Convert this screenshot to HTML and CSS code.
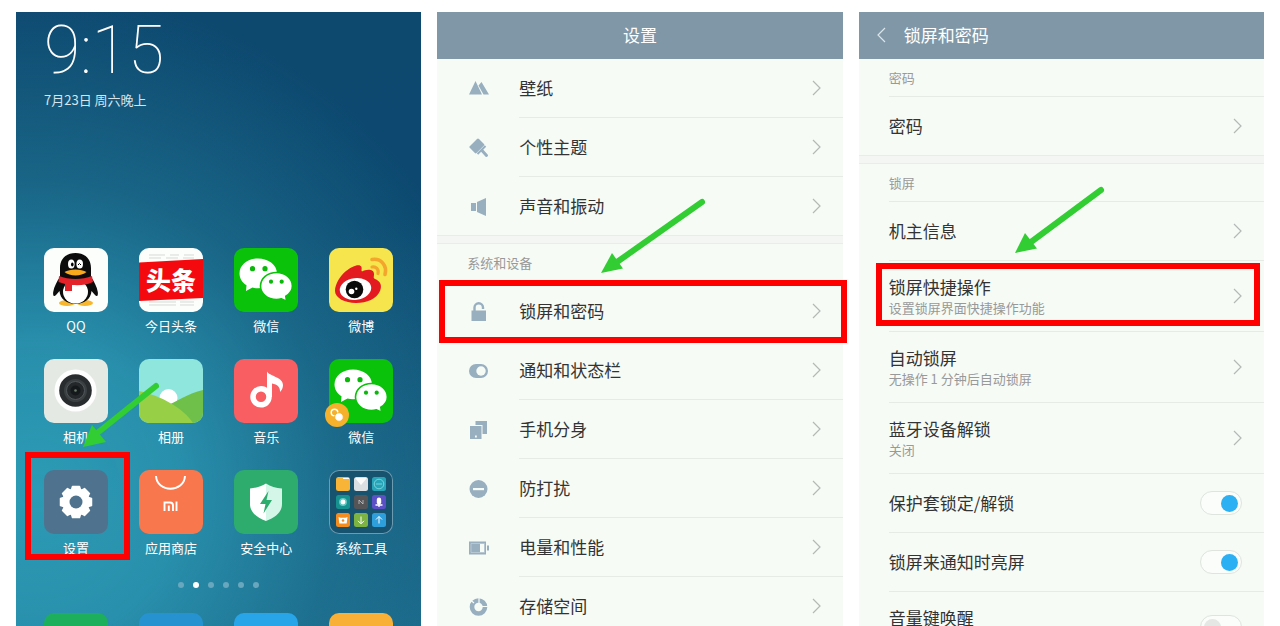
FILE: index.html
```html
<!DOCTYPE html>
<html lang="zh-CN">

<head>
    <meta charset="UTF-8">
    <meta name="viewport" content="width=device-width, initial-scale=1.0">
    <title>锁屏快捷操作</title>
    <link rel="stylesheet" href="styles.css">
</head>

<body>
    <!-- shared shapes -->
    <svg class="defs" aria-hidden="true">
        <symbol id="next" viewBox="0 0 9 16">
            <path d="M1 1l7 7-7 7" fill="none" stroke="#b4b9b5" stroke-width="1.2" />
        </symbol>
        <symbol id="wechat" viewBox="0 0 64 64">
            <path d="M24 10.500C13.500 10.500 5.500 17 5.500 25.500c0 5 2.800 9 7 11.800L12 43l6.500-3.400c1.800.5 3.600.7 5.500.7 10.500 0 19-6.300 19-14.800s-8.500-15-19-15z" fill="#fff" />
            <path d="M42.500 24.500c-9 0-16 6-16 13.500s7 13.500 16 13.500c1.800 0 3.300-.2 4.900-.7l5.200 2.500-.8-5c4-2.500 6.600-6 6.600-10.300 0-7.500-7-13.500-15.900-13.500z" fill="#fff" stroke="#0ac20a" stroke-width="1.600" />
            <g fill="#0ab80a">
                <circle cx="18.500" cy="20.700" r="2.600" />
                <circle cx="31" cy="20.700" r="2.600" />
                <circle cx="37" cy="33.700" r="2.100" />
                <circle cx="47.700" cy="33.700" r="2.100" />
            </g>
        </symbol>
    </svg>

    <main class="box">
        <!-- home screen -->
        <section class="panel home">
            <div class="clock">
                <p class="time">9:15</p>
                <p class="date">7月23日 周六晚上</p>
            </div>
            <div class="apps">
                <a class="app" href="#">
                    <svg class="icon qq" viewBox="0 0 64 64">
                        <ellipse cx="23" cy="55" rx="8" ry="3" fill="#f8b62c" />
                        <ellipse cx="41" cy="55" rx="8" ry="3" fill="#f8b62c" />
                        <path d="M31.500 5C22 5 16 11 16 20v9c-3 4-6 10-6.800 15-.5 4 1 5 2.800 3l3.500-4C16 51 23 56 31.500 56S47 51 47.500 43l3.500 4c1.800 2 3.300 1 2.800-3-.8-5-3.800-11-6.800-15v-9C47 11 41 5 31.500 5z" fill="#0c0c0c" />
                        <ellipse cx="31.500" cy="44" rx="12.500" ry="11.500" fill="#fff" />
                        <path d="M15 28c10 4 23 4 33 0l1 6c-6 3-13 3.500-21 3v6h-7v-7l-6.500-2z" fill="#e3222a" />
                        <ellipse cx="27.300" cy="16" rx="3.300" ry="4.500" fill="#fff" />
                        <ellipse cx="35.700" cy="16" rx="3.300" ry="4.500" fill="#fff" />
                        <ellipse cx="28.300" cy="16.500" rx="1.300" ry="1.900" fill="#000" />
                        <path d="M34 17q1.500-3 3 0" fill="none" stroke="#000" />
                        <path d="M20.500 24c5-3.500 17-3.500 22 0-5 4.500-17 4.500-22 0z" fill="#f8a81c" />
                    </svg>
                    <span>QQ</span>
                </a>
                <a class="app" href="#">
                    <svg class="icon news" viewBox="0 0 64 64">
                        <path d="M10 7h16M31 7h9M45 7h10M10 10h12M27 10h12M44 10h11M10 54h27M41 54h14M10 57h27M41 57h14" stroke="#d7d9d7" stroke-width="1" />
                        <path d="M0 14.500L64 11v39L0 53z" fill="#f40a0e" />
                        <text class="news-name" x="7" y="42">头条</text>
                    </svg>
                    <span>今日头条</span>
                </a>
                <a class="app" href="#">
                    <svg class="icon wechat">
                        <use href="#wechat" />
                    </svg>
                    <span>微信</span>
                </a>
                <a class="app" href="#">
                    <svg class="icon weibo" viewBox="0 0 64 64">
                        <path d="M6 43c0-7 5-15 11-20s14-8 15.500-4c.5 2-.5 4 .5 4.500 4-2.500 12-3 12 2.500 0 3-1 4 1 5 5 2 7.500 6 5 12-3.500 8-13 12-24 12S6 50 6 43z" fill="#e31a20" />
                        <ellipse cx="26.500" cy="41" rx="15.800" ry="10.800" fill="#fff" transform="rotate(-7 26.500 41)" />
                        <circle cx="25.500" cy="41.500" r="8.800" fill="#0a0a0a" />
                        <circle cx="22.500" cy="43.500" r="2.800" fill="#fff" />
                        <circle cx="27.300" cy="40.700" r="1.200" fill="#fff" />
                        <path d="M43 11.500c9-1.500 15.500 6 13 15" fill="none" stroke="#f4a52c" stroke-width="3.600" stroke-linecap="round" />
                        <path d="M43 19c4-.8 7 2.300 6 6.500" fill="none" stroke="#f4a52c" stroke-width="3.200" stroke-linecap="round" />
                    </svg>
                    <span>微博</span>
                </a>
                <a class="app" href="#">
                    <svg class="icon camera" viewBox="0 0 64 64">
                        <circle cx="31.500" cy="31.500" r="21" fill="#fdfefd" />
                        <circle cx="31.500" cy="31.500" r="16.300" fill="#292c2e" />
                        <circle cx="31.500" cy="31.500" r="11.500" fill="#3a3f42" />
                        <circle cx="31.500" cy="31.500" r="9" fill="#24282a" stroke="#50575a" />
                        <circle cx="31.500" cy="31.500" r="5" fill="#15191b" />
                        <circle cx="31.500" cy="31.500" r="1.300" fill="#6c7c70" />
                    </svg>
                    <span>相机</span>
                </a>
                <a class="app" href="#">
                    <svg class="icon album" viewBox="0 0 64 64">
                        <circle cx="29.500" cy="39" r="9" fill="#fff" />
                        <path d="M24 48c14-5 25-14 40-17v33H24z" fill="#6fc04b" />
                        <path d="M0 32c22 5 43 16 54 32H0z" fill="#97d046" />
                    </svg>
                    <span>相册</span>
                </a>
                <a class="app" href="#">
                    <svg class="icon music" viewBox="0 0 64 64">
                        <circle cx="27" cy="37.800" r="8" fill="none" stroke="#fff" stroke-width="5.500" />
                        <path d="M33 12.500c3 5 16 5.500 16 13.500 0 3-1.200 5-3 7 .3-5-2.500-7.500-8-8.500V38h-5z" fill="#fff" />
                    </svg>
                    <span>音乐</span>
                </a>
                <a class="app" href="#">
                    <svg class="icon wechat">
                        <use href="#wechat" />
                    </svg>
                    <svg class="badge" viewBox="0 0 24 24">
                        <circle cx="12" cy="12" r="12" fill="#f5b12b" />
                        <circle cx="9.500" cy="9.500" r="3.300" fill="none" stroke="#fff" stroke-width="1.500" />
                        <circle cx="14" cy="14" r="4.300" fill="#fff" stroke="#f5b12b" />
                    </svg>
                    <span>微信</span>
                </a>
                <a class="app current" href="#">
                    <svg class="icon settings" viewBox="0 0 64 64">
                        <g fill="#fff" stroke="#fff" stroke-width="1.500" stroke-linejoin="round">
                            <circle cx="32" cy="32" r="13" />
                            <path id="teeth" d="M28.500 16.500h7l1.500 5v21l-1.500 5h-7l-1.500-5v-21z" />
                            <use href="#teeth" transform="rotate(45 32 32)" />
                            <use href="#teeth" transform="rotate(90 32 32)" />
                            <use href="#teeth" transform="rotate(135 32 32)" />
                        </g>
                        <circle cx="32" cy="32" r="6.500" fill="#4f738f" />
                    </svg>
                    <span>设置</span>
                    <svg class="arrow" width="80" height="68" viewBox="0 0 80 68">
                        <path d="M74 6L14 54" stroke="#32cd32" stroke-width="6" stroke-linecap="round" />
                        <path d="M1 67l9-22 14 17z" fill="#32cd32" />
                    </svg>
                </a>
                <a class="app" href="#">
                    <svg class="icon store" viewBox="0 0 64 64">
                        <path d="M17 6c1 17 28 17 29 0" fill="none" stroke="#fff" stroke-width="2" />
                        <path d="M25.500 41v-8.500h5.500q3 0 3 3V41M29.800 35.500V41M37.500 31.500V41" fill="none" stroke="#fff" stroke-width="1.900" />
                    </svg>
                    <span>应用商店</span>
                </a>
                <a class="app" href="#">
                    <svg class="icon safe" viewBox="0 0 64 64">
                        <path d="M32 13.500c4.500 3 10 4.500 16 5V34c0 8-6 13-16 17z" fill="#d3f6e8" />
                        <path d="M32 13.500c-4.500 3-10 4.500-16 5V34c0 8 6 13 16 17z" fill="#fff" />
                        <path d="M34.500 21L26 34h5.500l-2 9.500L38 30h-5.500z" fill="#2dac6d" />
                    </svg>
                    <span>安全中心</span>
                </a>
                <a class="app" href="#">
                    <svg class="icon folder" viewBox="0 0 64 64">
                        <rect x="7" y="7" width="14" height="14" rx="2.500" fill="#f8b436" />
                        <path d="M14 8.500h6" stroke="#fff" />
                        <rect x="25" y="7" width="14" height="14" rx="2.500" fill="#dcdfe1" />
                        <path d="M26 8h12l-6 7z" fill="#fafafa" />
                        <rect x="43" y="7" width="14" height="14" rx="2.500" fill="#28a4b8" />
                        <circle cx="50" cy="14" r="4.800" fill="none" stroke="#78d3dc" />
                        <path d="M47 14h6" stroke="#78d3dc" />
                        <rect x="7" y="25" width="14" height="14" rx="2.500" fill="#16918f" />
                        <circle cx="14" cy="32" r="3.200" fill="#fff" stroke="#62c8c2" stroke-width="1.500" />
                        <rect x="25" y="25" width="14" height="14" rx="2.500" fill="#555558" />
                        <path d="M30 34v-4l4 4v-4" fill="none" stroke="#c6c6c8" stroke-width=".8" />
                        <rect x="43" y="25" width="14" height="14" rx="2.500" fill="#5b50c6" />
                        <rect x="47.800" y="27.500" width="4.400" height="7" rx="2.200" fill="#fff" />
                        <path d="M46.500 35h7M50 34v3" stroke="#fff" stroke-width="1.300" />
                        <rect x="7" y="43" width="14" height="14" rx="2.500" fill="#f58c20" />
                        <path d="M9.500 47l2 .7h5l2-.7-.8 6.500h-7.400z" fill="#fff" />
                        <circle cx="14" cy="50.500" r="1.300" fill="#f58c20" />
                        <rect x="25" y="43" width="14" height="14" rx="2.500" fill="#7cb342" />
                        <path d="M32 46.500v7M29 50.800l3 3 3-3" fill="none" stroke="#fff" />
                        <rect x="43" y="43" width="14" height="14" rx="2.500" fill="#2f9fdc" />
                        <path d="M50 53.500v-7M47 49.500l3-3 3 3" fill="none" stroke="#fff" />
                    </svg>
                    <span>系统工具</span>
                </a>
            </div>
            <ul class="dots">
                <li></li>
                <li class="active"></li>
                <li></li>
                <li></li>
                <li></li>
                <li></li>
            </ul>
            <div class="dock">
                <a class="icon phone" href="#" aria-label="电话"></a>
                <a class="icon contacts" href="#" aria-label="联系人"></a>
                <a class="icon message" href="#" aria-label="短信"></a>
                <a class="icon browser" href="#" aria-label="浏览器"></a>
            </div>
        </section>

        <!-- settings -->
        <section class="panel">
            <header class="bar center">
                <h1>设置</h1>
            </header>
            <a class="row" href="#">
                <svg class="sign" viewBox="0 0 20 20">
                    <path d="M0 15.500L6.500 2l6.500 13.500zM9.500 6.500L12.500 3 20 15.500h-5.500z" />
                </svg>
                <div class="con"><span class="name">壁纸</span><svg class="next"><use href="#next" /></svg></div>
            </a>
            <a class="row" href="#">
                <svg class="sign" viewBox="0 0 20 20">
                    <path d="M.5 8.500L8 1q1-.8 2 0l5 5q.7.800 0 1.500L7.500 15q-.8.800-1.600 0L.5 9.500q-.5-.5 0-1z" />
                    <path d="M16.500 8l-8 8" stroke="#98afc0" stroke-width="2" />
                    <path d="M13 12.500l4.500 5" stroke="#98afc0" stroke-width="3" stroke-linecap="round" />
                </svg>
                <div class="con"><span class="name">个性主题</span><svg class="next"><use href="#next" /></svg></div>
            </a>
            <a class="row last" href="#">
                <svg class="sign" viewBox="0 0 20 20">
                    <path d="M2 6h5v8H2zM8 5l9-4v18l-9-4z" />
                </svg>
                <div class="con"><span class="name">声音和振动</span><svg class="next"><use href="#next" /></svg></div>
            </a>
            <div class="line"></div>
            <h2 class="group">系统和设备</h2>
            <a class="row current" href="#">
                <svg class="sign" viewBox="0 0 20 20">
                    <path d="M2.500 8.500h14.500v10.500H2.500z" />
                    <path d="M5.500 9V5.500a4.200 4.200 0 0 1 8.500 0v1.500" fill="none" stroke="#98afc0" stroke-width="2.400" />
                </svg>
                <div class="con"><span class="name">锁屏和密码</span><svg class="next"><use href="#next" /></svg></div>
                <svg class="arrow" width="108" height="76" viewBox="0 0 108 76">
                    <path d="M102 4L17 64" stroke="#32cd32" stroke-width="6" stroke-linecap="round" />
                    <path d="M1 75l11-20 11 15.500z" fill="#32cd32" />
                </svg>
            </a>
            <a class="row" href="#">
                <svg class="sign" viewBox="0 0 20 20">
                    <rect y="3" width="19" height="14" rx="7" />
                    <circle cx="12" cy="10" r="4.700" fill="#f6fbf6" />
                </svg>
                <div class="con"><span class="name">通知和状态栏</span><svg class="next"><use href="#next" /></svg></div>
            </a>
            <a class="row" href="#">
                <svg class="sign" viewBox="0 0 20 20">
                    <path d="M6.500 1H18v13h-4.500V5h-7z" />
                    <path d="M1 6h11.500v13H1zM6 15.500v2h1.800v-2z" fill-rule="evenodd" />
                </svg>
                <div class="con"><span class="name">手机分身</span><svg class="next"><use href="#next" /></svg></div>
            </a>
            <a class="row" href="#">
                <svg class="sign" viewBox="0 0 20 20">
                    <circle cx="9.500" cy="10" r="9" />
                    <path d="M4 9h11v2.200H4z" fill="#f6fbf6" />
                </svg>
                <div class="con"><span class="name">防打扰</span><svg class="next"><use href="#next" /></svg></div>
            </a>
            <a class="row" href="#">
                <svg class="sign" viewBox="0 0 20 20">
                    <path d="M0 3.500h17v13H0zM11 6v8h4V6zM18 7.500h2v5h-2z" fill-rule="evenodd" />
                    <path d="M2 5.500h13.500v9H2z" fill="none" stroke="#c3d1da" stroke-width=".7" />
                </svg>
                <div class="con"><span class="name">电量和性能</span><svg class="next"><use href="#next" /></svg></div>
            </a>
            <a class="row" href="#">
                <svg class="sign" viewBox="0 0 20 20">
                    <circle cx="9.500" cy="10" r="6.500" fill="none" stroke="#98afc0" stroke-width="4.600" />
                    <path d="M10 8V0M12 9.500h8M5 6L1.500 3" stroke="#f6fbf6" stroke-width="1.200" />
                </svg>
                <div class="con"><span class="name">存储空间</span><svg class="next"><use href="#next" /></svg></div>
            </a>
        </section>

        <!-- lock screen and password -->
        <section class="panel lock">
            <header class="bar">
                <button class="back" type="button" aria-label="返回">
                    <svg width="9" height="16" viewBox="0 0 9 16">
                        <path d="M8 1L1 8l7 7" fill="none" stroke="#dbe5eb" stroke-width="1.200" />
                    </svg>
                </button>
                <h1>锁屏和密码</h1>
            </header>
            <h2 class="group">密码</h2>
            <a class="row last" href="#">
                <div class="con"><span class="name">密码</span><svg class="next"><use href="#next" /></svg></div>
            </a>
            <div class="line"></div>
            <h2 class="group">锁屏</h2>
            <a class="row" href="#">
                <div class="con"><span class="name">机主信息</span><svg class="next"><use href="#next" /></svg></div>
            </a>
            <a class="row tall current" href="#">
                <div class="con">
                    <div class="name">锁屏快捷操作<p>设置锁屏界面快捷操作功能</p></div>
                    <svg class="next"><use href="#next" /></svg>
                </div>
                <svg class="arrow" width="92" height="68" viewBox="0 0 92 68">
                    <path d="M87 4L17 56" stroke="#32cd32" stroke-width="6" stroke-linecap="round" />
                    <path d="M1 67l10-20 12 15.500z" fill="#32cd32" />
                </svg>
            </a>
            <a class="row tall" href="#">
                <div class="con">
                    <div class="name">自动锁屏<p>无操作 1 分钟后自动锁屏</p></div>
                    <svg class="next"><use href="#next" /></svg>
                </div>
            </a>
            <a class="row tall" href="#">
                <div class="con">
                    <div class="name">蓝牙设备解锁<p>关闭</p></div>
                    <svg class="next"><use href="#next" /></svg>
                </div>
            </a>
            <label class="row">
                <span class="con"><span class="name">保护套锁定/解锁</span><input class="switch" type="checkbox" checked></span>
            </label>
            <label class="row">
                <span class="con"><span class="name">锁屏来通知时亮屏</span><input class="switch" type="checkbox" checked></span>
            </label>
            <label class="row tall">
                <span class="con"><span class="name two">音量键唤醒</span><input class="switch" type="checkbox"></span>
            </label>
        </section>
    </main>
</body>

</html>
```

FILE: styles.css
```css
* {
    margin: 0;
    padding: 0;
    box-sizing: border-box;
    list-style: none;
}

body {
    height: 100vh;
    overflow: hidden;
    background-color: #fff;
    font-family: "Noto Sans CJK SC", sans-serif;
    font-size: 17px;
    color: #333;
}

a {
    color: inherit;
    text-decoration: none;
}

.defs {
    position: absolute;
    width: 0;
    height: 0;
}

.box {
    display: grid;
    grid-template-columns: repeat(3, 1fr);
    gap: 16px;
    padding: 12px 16px 0;
}

.panel {
    background-color: #f6fbf6;
}

/* home screen */
.home {
    padding: 0 28px;
    background: radial-gradient(ellipse 120% 75% at 5% 72%, #2d9bb5 0%, rgba(41, 146, 174, 0.95) 30%, rgba(33, 120, 150, 0.6) 62%, rgba(20, 90, 125, 0) 100%),
        linear-gradient(165deg, #0e4870 0%, #0c486f 40%, #14577b 70%, #1c6a8c 100%);
    color: #fff;
}

.clock {
    height: 236px;
}

.time {
    padding-top: 6px;
    font-family: Roboto, sans-serif;
    font-size: 66px;
    font-weight: 100;
    line-height: 66px;
}

.date {
    padding-top: 6px;
    font-size: 13px;
    line-height: 20px;
    color: #d6e4ec;
}

.apps {
    display: grid;
    grid-template-columns: repeat(4, 64px);
    justify-content: space-between;
    row-gap: 23px;
}

.app {
    position: relative;
    display: flex;
    flex-direction: column;
    align-items: center;
    gap: 4px;
    font-size: 13px;
    line-height: 20px;
    white-space: nowrap;
}

.icon {
    display: block;
    width: 64px;
    height: 64px;
    border-radius: 10px;
}

.qq,
.news {
    background-color: #fcfefc;
}

.news-name {
    font-size: 25px;
    font-weight: 900;
    fill: #fff;
}

.wechat {
    background-color: #0ac20a;
}

.weibo {
    background-color: #f6e54c;
}

.camera {
    background-color: #e5e9e4;
}

.album {
    background-color: #8ee6dc;
}

.music {
    background-color: #f95f62;
}

.settings {
    background-color: #4f738f;
}

.store {
    background-color: #f9774c;
}

.safe {
    background-color: #2dac6d;
}

.folder {
    background-color: #17536f;
    box-shadow: inset 0 0 0 1px #6d9bb0;
}

.badge {
    position: absolute;
    left: -4px;
    top: 44px;
    width: 24px;
    height: 24px;
}

.dots {
    display: flex;
    justify-content: center;
    gap: 9px;
    padding: 24px 0 25px;
}

.dots li {
    width: 6px;
    height: 6px;
    border-radius: 50%;
    background-color: #68a7bd;
}

.dots .active {
    background-color: #fff;
}

.dock {
    display: flex;
    justify-content: space-between;
}

.phone {
    background-color: #1eaf5c;
}

.contacts {
    background-color: #2693d0;
}

.message {
    background-color: #28a5e8;
}

.browser {
    background-color: #f8b036;
}

/* settings lists */
.bar {
    display: flex;
    align-items: center;
    height: 47px;
    padding-bottom: 2px;
    background-color: #7f97a7;
    color: #fff;
}

.bar h1 {
    font-size: 17px;
    font-weight: 400;
    line-height: 24px;
}

.center {
    justify-content: center;
}

.back {
    padding: 0 18px;
    border: 0;
    background: none;
}

.back svg {
    display: block;
}

.group {
    height: 38px;
    padding-left: 30px;
    font-size: 13px;
    font-weight: 400;
    line-height: 37px;
    color: #999;
}

.lock .group {
    margin-left: 30px;
    padding-left: 0;
    border-bottom: 1px solid #e6ebe6;
}

.row {
    position: relative;
    display: flex;
    align-items: center;
    gap: 30px;
    height: 59px;
    padding-left: 32px;
}

.lock .row {
    padding-left: 30px;
}

.lock .tall {
    height: 71px;
}

.sign {
    width: 20px;
    height: 20px;
    fill: #98afc0;
}

.con {
    flex: 1;
    display: flex;
    align-items: center;
    justify-content: space-between;
    height: 100%;
    padding-right: 22px;
    border-bottom: 1px solid #e6ebe6;
}

.last .con {
    border-color: transparent;
}

.name {
    line-height: 24px;
}

.name p {
    font-size: 13px;
    line-height: 18px;
    color: #999;
}

.two {
    padding-bottom: 18px;
}

.next {
    width: 9px;
    height: 16px;
}

.line {
    height: 9px;
    margin-top: -1px;
    border-top: 1px solid #e9ede9;
    border-bottom: 1px solid #e9ede9;
    background-color: #f3f6f3;
}

.switch {
    appearance: none;
    width: 42px;
    height: 24px;
    padding: 3px;
    border: 1px solid #dfe4df;
    border-radius: 12px;
    background-color: #fafdfa;
}

.switch::before {
    content: "";
    display: block;
    width: 17px;
    height: 17px;
    border-radius: 50%;
    background-color: #e4e7e4;
}

.switch:checked::before {
    margin-left: auto;
    background-color: #2cb0f4;
}

/* red frame and green arrow */
.current::after {
    content: "";
    position: absolute;
    inset: -2px -4px -2px 2px;
    z-index: 1;
    border: 6px solid #fe0000;
}

.app.current::after {
    inset: -18px -22px -2px -19px;
}

.lock .current::after {
    inset: 2px 4px 6px 17px;
}

.arrow {
    position: absolute;
    z-index: 2;
    left: 163px;
    bottom: 67px;
}

.app .arrow {
    left: 38px;
    bottom: 110px;
}

.lock .arrow {
    left: 155px;
    bottom: 78px;
}
```
